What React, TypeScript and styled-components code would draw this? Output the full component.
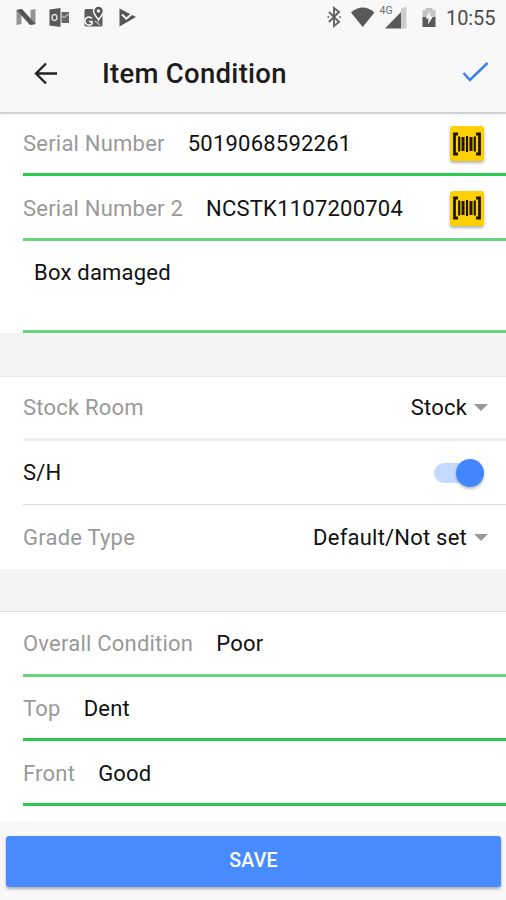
import React from 'react';
import styled, { createGlobalStyle } from 'styled-components';

const GlobalStyle = createGlobalStyle`
  *, *::before, *::after { box-sizing: border-box; }
  body { margin: 0; background: #f4f4f4; font-family: Roboto, "Liberation Sans", sans-serif; }
`;

const Screen = styled.main`
  width: 506px;
  height: 900px;
  display: flex;
  flex-direction: column;
  overflow: hidden;
  background: #f4f4f4;
  color: #111;
  font-size: 22px;
  letter-spacing: 0.22px;
`;

const StatusBar = styled.div`
  height: 36px;
  flex: none;
  display: flex;
  justify-content: space-between;
  background: #f8f8f8;
`;

const StatusIcon = styled.svg`
  display: block;
  flex: none;
`;

const Clock = styled.time`
  width: 50px;
  margin-left: 9px;
  font-size: 20px;
  line-height: 37px;
  letter-spacing: -0.1px;
  color: #4c4c4c;
`;

const StatusGroup = styled.div`
  display: flex;
  padding-right: 10px;
`;

const Header = styled.header`
  height: 78px;
  flex: none;
  display: flex;
  align-items: center;
  padding: 0 17px 0 34px;
  background: #f8f8f8;
  border-bottom: 2px solid #d2d2d2;
  box-shadow: 0 1px 2px rgba(0, 0, 0, 0.08);
  z-index: 1;
`;

const IconButton = styled.button`
  padding: 0;
  border: 0;
  background: none;
  display: flex;
`;

const Title = styled.h1`
  flex: 1;
  margin: 0 0 0 44px;
  font-size: 27.5px;
  font-weight: 500;
  letter-spacing: 0.28px;
  line-height: 36px;
  color: #1c1c1c;
`;

const Group = styled.section<{ $top?: string }>`
  flex: none;
  background: #fff;
  border-top: ${(p) => (p.$top ? `1px solid ${p.$top}` : '0')};
`;

const Row = styled.div<{ $height: number; $line?: string; $thick?: number; $drop?: number }>`
  height: ${(p) => p.$height}px;
  margin-left: 23px;
  padding-top: ${(p) => p.$drop ?? 0}px;
  padding-right: 22px;
  display: flex;
  align-items: center;
  border-bottom: ${(p) => (p.$line ? `${p.$thick ?? 3}px solid ${p.$line}` : '0')};
`;

const Label = styled.label`
  color: #999;
  white-space: nowrap;
`;

const Value = styled.span`
  margin-left: 23px;
  flex: 1;
  white-space: nowrap;
`;

const Note = styled.div`
  height: 92px;
  margin-left: 23px;
  padding: 19px 11px 0;
  line-height: 26px;
  border-bottom: 3px solid #69d67c;
`;

const Select = styled.div`
  margin-left: auto;
  margin-right: -4px;
  display: flex;
  align-items: center;
  gap: 7px;
`;

const Caret = styled.i`
  border: 7px solid transparent;
  border-top-color: #999;
  border-bottom: 0;
`;

const Gap = styled.div<{ $height: number }>`
  height: ${(p) => p.$height}px;
  flex: none;
`;

const ScanButton = styled.button`
  width: 34px;
  height: 35px;
  padding: 0;
  border: 0;
  border-radius: 3px;
  background: #ffd000;
  box-shadow: 0 2px 3px rgba(0, 0, 0, 0.3);
  display: grid;
  place-items: center;
`;

const Track = styled.div`
  width: 50px;
  height: 20px;
  margin-left: auto;
  border-radius: 10px;
  background: #c5daff;
  display: flex;
  align-items: center;
  justify-content: flex-end;
`;

const Thumb = styled.div`
  width: 28px;
  height: 28px;
  flex: none;
  border-radius: 50%;
  background: #4285fc;
  box-shadow: 0 2px 3px rgba(0, 0, 0, 0.25);
`;

const Filler = styled.div`
  flex: 1;
  background: #fff;
`;

const Footer = styled.footer`
  height: 78px;
  flex: none;
  padding: 14px 5px 0 6px;
  background: #f8f8f8;
`;

const SaveButton = styled.button`
  width: 100%;
  height: 51px;
  border: 0;
  border-radius: 3px;
  background: #488aff;
  color: #fff;
  font: 500 19.5px/47px Roboto, sans-serif;
  letter-spacing: 0.2px;
  padding: 0 0 3px;
  box-shadow: 0 2px 3px rgba(0, 0, 0, 0.3);
`;

const GREEN = '#2dca50';
const SOFT_GREEN = '#69d67c';

function Scan() {
  return (
    <ScanButton aria-label="Scan barcode">
      <svg width="30" height="24" viewBox="0 0 30 24">
        <path d="M6 2H2.500v20H6M24 2h3.500v20H24" fill="none" stroke="#1d1700" strokeWidth="2.800" />
        <path d="M7.200 4.500v15M22.800 4.500v15M15 4v16" stroke="#1d1700" strokeWidth="2.200" />
        <path d="M11 5v14M19 5v14" stroke="#1d1700" strokeWidth="3" />
      </svg>
    </ScanButton>
  );
}

function NotificationIcons() {
  return (
    <StatusIcon width="150" height="36" viewBox="0 0 150 36">
      <path d="M16.500 10l5-1v15l-5 1zM30.500 10l5-1v15l-5 1z" fill="#939393" />
      <path d="M16.500 10l5.500-1 13.500 15-5.500 1z" fill="#555" />
      <path d="M49.500 9.500L60.500 8v19l-11-1.500z" fill="#595959" />
      <path d="M61.500 12h7.500v11h-7.500z" fill="#666" />
      <path d="M61 15.500l3 2 5-3.500" fill="none" stroke="#bbb" strokeWidth="1.200" />
      <ellipse cx="54.500" cy="17.500" rx="2.400" ry="3" fill="none" stroke="#ddd" strokeWidth="1.500" />
      <rect x="84.500" y="9" width="18" height="17.500" rx="1.500" fill="#5b5b5b" />
      <path d="M92 18.500a4 4 0 1 0 0 5.200v-2h-3" fill="none" stroke="#f1f1f1" strokeWidth="1.700" />
      <path d="M95 21l5 4" fill="none" stroke="#c5c5c5" strokeWidth="1.300" />
      <path d="M98.500 20c-1-3-5-5-5-9a5 5 0 0 1 10 0c0 4-4 6-5 9z" fill="#555" stroke="#f8f8f8" strokeWidth="1.500" />
      <circle cx="98.500" cy="11" r="1.800" fill="#eee" />
      <path d="M119.500 8.500l16.500 8.500-16.500 9.500z" fill="#565656" />
      <path d="M122 14.500l4.300 4.200 7.500-6.500" fill="none" stroke="#f8f8f8" strokeWidth="2" />
    </StatusIcon>
  );
}

function SystemIcons() {
  return (
    <StatusIcon width="111" height="36" viewBox="0 0 111 36">
      <path d="M3 12l10 10-5 4V8l5 4L3 22" fill="none" stroke="#626262" strokeWidth="1.900" />
      <path d="M2.300 17h.1M14 17h.1" stroke="#777" strokeWidth="2" strokeLinecap="round" />
      <path d="M25 12.500Q36.500 2.500 48.500 12.500L36.700 27z" fill="#585858" />
      <text x="53.500" y="14" fill="#707070" fontSize="10.500" fontFamily="Roboto, sans-serif">4G</text>
      <path d="M75 8.500L80.500 6.500V28.500h-6z" fill="#ccc" />
      <path d="M59 28.500L75 12v16.500z" fill="#585858" />
      <path d="M96.500 10h3V8h7v2h3v8h-13z" fill="#c5c5c5" />
      <path d="M96.500 17h13v10h-13z" fill="#595959" />
      <path d="M104 11.500l-4.500 7h3l-.500 6 5-8h-3z" fill="#fafafa" />
    </StatusIcon>
  );
}

function Field({ label, value, height, line, drop, scan }: {
  label: string; value: string; height: number; line: string; drop?: number; scan?: boolean;
}) {
  return (
    <Row $height={height} $line={line} $drop={drop}>
      <Label>{label}</Label>
      <Value>{value}</Value>
      {scan && <Scan />}
    </Row>
  );
}

export default function App() {
  return (
    <>
      <GlobalStyle />
      <Screen>
        <StatusBar>
          <NotificationIcons />
          <StatusGroup>
            <SystemIcons />
            <Clock>10:55</Clock>
          </StatusGroup>
        </StatusBar>
        <Header>
          <IconButton aria-label="Back">
            <svg width="24" height="24" viewBox="0 0 24 24" fill="none" stroke="#222" strokeWidth="2.300">
              <path d="M23 11.500H2.500M12 1.500l-10 10 10 10" />
            </svg>
          </IconButton>
          <Title>Item Condition</Title>
          <IconButton aria-label="Confirm">
            <svg width="27" height="24" viewBox="0 0 27 24" fill="none" stroke="#3880f5" strokeWidth="2.500">
              <path d="M1.500 11l6.500 7L25.500 1" />
            </svg>
          </IconButton>
        </Header>
        <Group>
          <Field label="Serial Number" value="5019068592261" height={62} line={GREEN} scan />
          <Field label="Serial Number 2" value="NCSTK1107200704" height={65} line={SOFT_GREEN} drop={2} scan />
          <Note>Box damaged</Note>
        </Group>
        <Gap $height={43} />
        <Group $top="#e9e9e9">
          <Row $height={64} $line="#efefef">
            <Label>Stock Room</Label>
            <Select>Stock<Caret /></Select>
          </Row>
          <Row $height={64} $line="#dedede" $thick={1}>
            <span>S/H</span>
            <Track><Thumb /></Track>
          </Row>
          <Row $height={64}>
            <Label>Grade Type</Label>
            <Select>Default/Not set<Caret /></Select>
          </Row>
        </Group>
        <Gap $height={42} />
        <Group $top="#dcdcdc">
          <Field label="Overall Condition" value="Poor" height={65} line={SOFT_GREEN} drop={1} />
          <Field label="Top" value="Dent" height={64} line={GREEN} drop={2} />
          <Field label="Front" value="Good" height={65} line={GREEN} drop={2} />
        </Group>
        <Filler />
        <Footer><SaveButton>SAVE</SaveButton></Footer>
      </Screen>
    </>
  );
}
